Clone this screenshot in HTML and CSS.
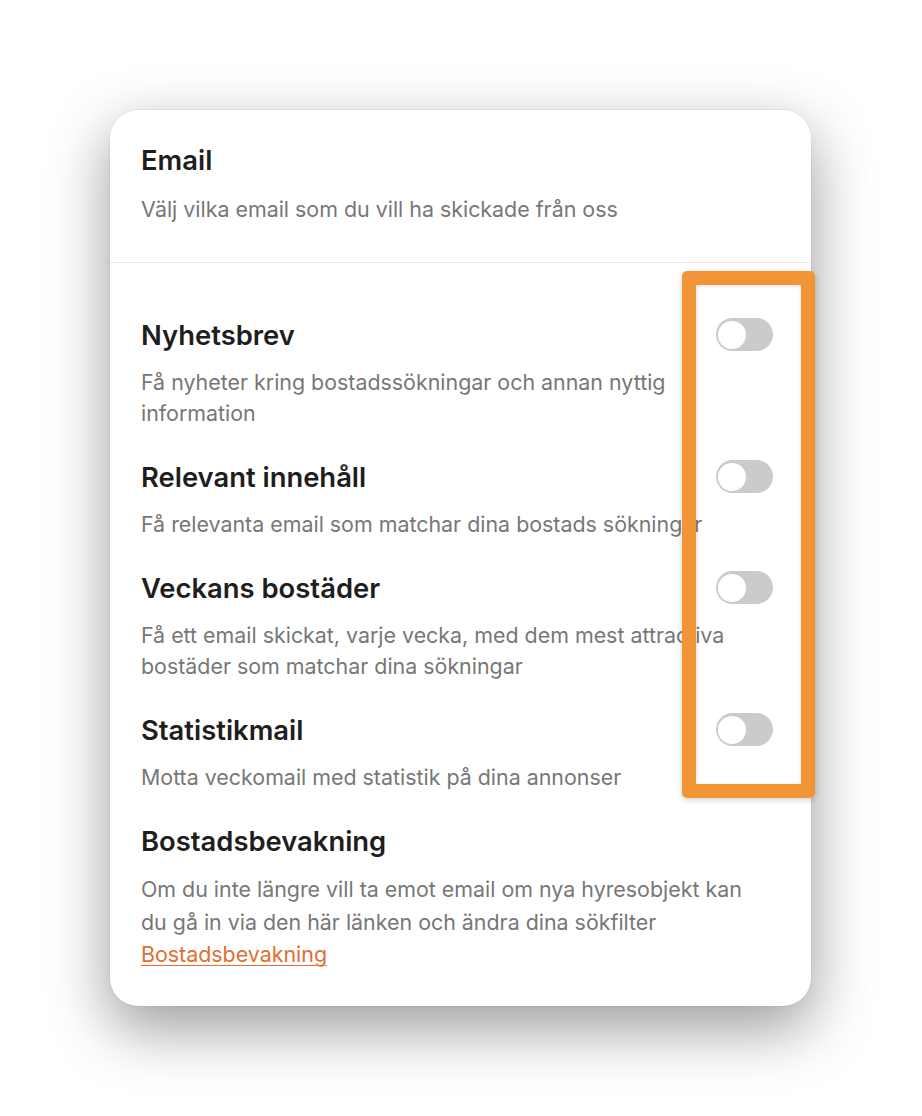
FILE: index.html
```html
<!DOCTYPE html>
<html lang="sv">
<head>
<meta charset="utf-8">
<link rel="stylesheet" href="styles.css">
</head>
<body>
<div class="card">
  <header class="card-head">
    <h1 class="title">Email</h1>
    <p class="desc">Välj vilka email som du vill ha skickade från oss</p>
  </header>
  <div class="card-body">
    <section class="item">
      <div class="item-row">
        <h2 class="item-title">Nyhetsbrev</h2>
        <span class="toggle"><span class="knob"></span></span>
      </div>
      <p class="desc">Få nyheter kring bostadssökningar och annan nyttig information</p>
    </section>
    <section class="item">
      <div class="item-row">
        <h2 class="item-title">Relevant innehåll</h2>
        <span class="toggle"><span class="knob"></span></span>
      </div>
      <p class="desc">Få relevanta email som matchar dina bostads sökningar</p>
    </section>
    <section class="item">
      <div class="item-row">
        <h2 class="item-title">Veckans bostäder</h2>
        <span class="toggle"><span class="knob"></span></span>
      </div>
      <p class="desc">Få ett email skickat, varje vecka, med dem mest attractiva bostäder som matchar dina sökningar</p>
    </section>
    <section class="item">
      <div class="item-row">
        <h2 class="item-title">Statistikmail</h2>
        <span class="toggle"><span class="knob"></span></span>
      </div>
      <p class="desc">Motta veckomail med statistik på dina annonser</p>
    </section>
    <section class="item item-last">
      <div class="item-row">
        <h2 class="item-title">Bostadsbevakning</h2>
      </div>
      <p class="desc">Om du inte längre vill ta emot email om nya hyresobjekt kan du gå in via den här länken och ändra dina sökfilter</p>
      <a class="desc link" href="#">Bostadsbevakning</a>
    </section>
  </div>
  <div class="highlight"></div>
</div>
</body>
</html>
```
FILE: styles.css
```css
html, body {
  margin: 0;
  padding: 0;
  background: #ffffff;
}
body {
  box-sizing: border-box;
  min-height: 1116px;
  padding: 110px 0 0 110px;
  font-family: Inter, "Liberation Sans", sans-serif;
}
.card {
  position: relative;
  width: 701px;
  box-sizing: border-box;
  background: #ffffff;
  border-radius: 28px;
  box-shadow: 0 22px 60px 2px rgba(0, 0, 0, 0.38), 0 0 0 1px rgba(0, 0, 0, 0.04);
}
.card-head {
  padding: 34px 32px 37px 31px;
  border-bottom: 1px solid #e9e9e9;
}
.card-head .desc {
  line-height: 32px;
}
.title {
  margin: 0 0 17px;
  font-size: 27.4px;
  line-height: 32px;
  font-weight: 600;
  color: #1e1e1e;
}
.desc {
  margin: 0;
  max-width: 620px;
  font-size: 21.4px;
  line-height: 31px;
  color: #777777;
}
.card-body {
  padding: 56px 32px 35px 31px;
  display: flex;
  flex-direction: column;
  gap: 32px;
}
.item {
  display: flex;
  flex-direction: column;
  align-items: flex-start;
}
.item-last .desc {
  line-height: 32.5px;
}
.item-row {
  align-self: stretch;
  display: flex;
  align-items: center;
  justify-content: space-between;
  height: 32px;
  margin-bottom: 16px;
}
.item-title {
  margin: 0;
  font-size: 27.4px;
  line-height: 32px;
  font-weight: 600;
  color: #1e1e1e;
}
.toggle {
  position: relative;
  display: block;
  flex: none;
  width: 57px;
  height: 33px;
  margin: -1px 6px 0 0;
  border-radius: 17px;
  background: #cbcbcb;
}
.knob {
  position: absolute;
  left: 2px;
  top: 2.5px;
  width: 28px;
  height: 28px;
  border-radius: 50%;
  background: #ffffff;
}
.link {
  display: block;
  color: #e06f33;
  text-decoration: underline;
  text-underline-offset: 3px;
  text-decoration-thickness: 1px;
}
.highlight {
  position: absolute;
  left: 572px;
  top: 161px;
  width: 133px;
  height: 527px;
  box-sizing: border-box;
  border: 14px solid #f29537;
  border-radius: 5px;
  box-shadow: 0 2px 6px rgba(0, 0, 0, 0.18), inset 0 1px 4px rgba(0, 0, 0, 0.12);
}
```
